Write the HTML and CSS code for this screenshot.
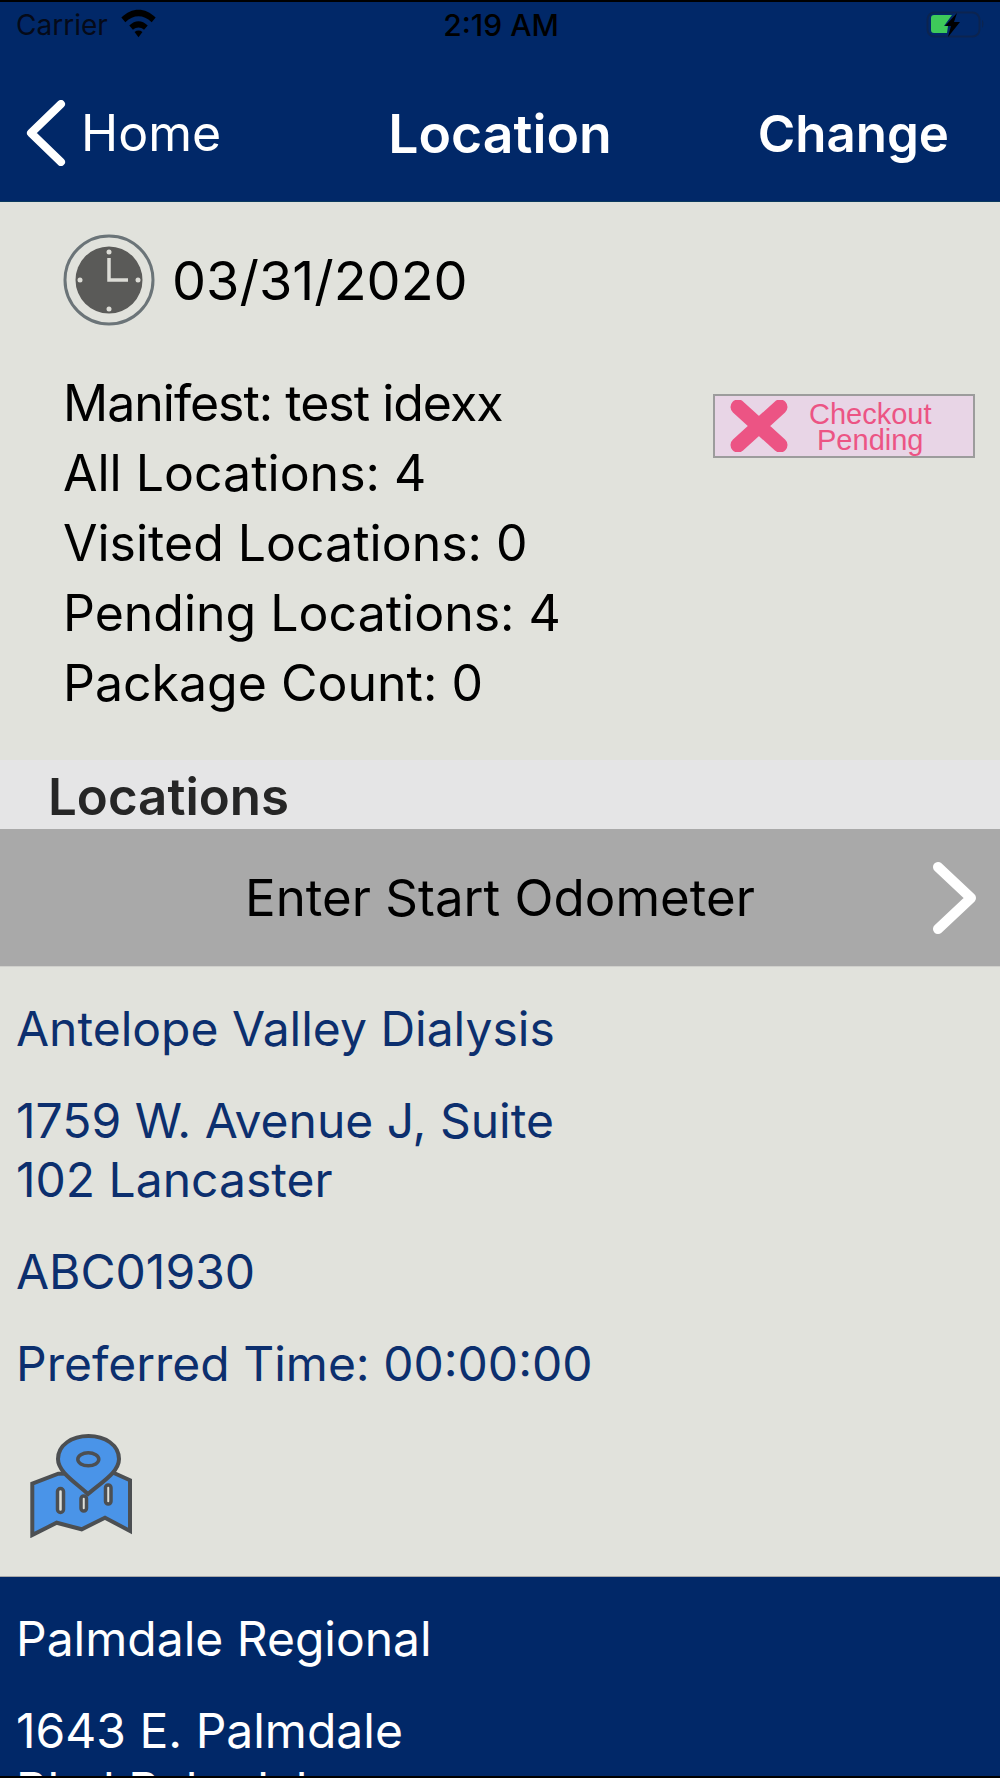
FILE: index.html
```html
<!doctype html>
<html lang="en">

<head>
    <meta charset="utf-8">
    <title>Location</title>
    <link rel="stylesheet" href="styles.css">
</head>

<body>
<div id="screen">
    <div id="header">
        <div class="status">
            <div class="status-left">
                <span>Carrier</span>
                <svg class="wifi" width="37" height="29" viewBox="1 3 26 22">
                    <path d="M1 9.500C9 1.500 19 1.500 27 9.500L24 13C17.500 7 10.500 7 4 13Z"/>
                    <path d="M7 15.500C11.500 11.200 16.500 11.200 21 15.500L18.200 18.700C15.500 16.500 12.500 16.500 9.800 18.700Z"/>
                    <path d="M11 20.500C13 19 15 19 17 20.500L14 24.500Z"/>
                </svg>
            </div>
            <div class="status-time">2:19 AM</div>
            <svg class="battery" width="62" height="28" viewBox="0 0 62 28">
                <rect x="3.500" y="1.500" width="52" height="24" rx="7" fill="none" stroke="#0c2450" stroke-width="2"/>
                <path d="M58 9c2 1 2 6 0 8z" fill="#0c2450"/>
                <path d="M7 7c0-2 1-3 3-3h18l-8 11h4l-1 7H10c-2 0-3-1-3-3z" fill="#3ec95a"/>
                <path d="M33 2L21 15h6l-3 11 12-15h-6z" fill="#000"/>
            </svg>
        </div>
        <div class="nav">
            <div class="nav-back">
                <svg width="40" height="66" viewBox="0 0 40 66">
                    <path d="M35 4L5 33l30 29" fill="none" stroke="#fff" stroke-width="8" stroke-linecap="round" stroke-linejoin="round"/>
                </svg>
                <span>Home</span>
            </div>
            <div class="nav-title">Location</div>
            <div class="nav-right">Change</div>
        </div>
    </div>

    <div class="summary">
        <div class="date-row">
            <svg width="92" height="92" viewBox="0 0 92 92">
                <circle cx="46" cy="46" r="44" fill="none" stroke="#6b7478" stroke-width="3"/>
                <circle cx="46" cy="46" r="33.500" fill="#5a5a58"/>
                <g fill="#dcdcd6">
                    <circle cx="46" cy="18" r="2.500"/>
                    <circle cx="46" cy="75" r="2.500"/>
                    <circle cx="17" cy="46" r="2.500"/>
                    <circle cx="75" cy="46" r="2.500"/>
                </g>
                <path d="M46 24v22h19" fill="none" stroke="#dcdcd6" stroke-width="3.500"/>
            </svg>
            <div class="date">03/31/2020</div>
        </div>
        <div class="stats">
            <div class="stat-lines">
                <div class="manifest">Manifest: test idexx</div>
                <div>All Locations: 4</div>
                <div>Visited Locations: 0</div>
                <div>Pending Locations: 4</div>
                <div>Package Count: 0</div>
            </div>
            <div class="badge">
                <svg width="58" height="52" viewBox="0 0 58 52">
                    <path d="M8 7l42 38M50 7L8 45" fill="none" stroke="#ec5484" stroke-width="15" stroke-linecap="round"/>
                </svg>
                <div class="badge-text">Checkout<br>Pending</div>
            </div>
        </div>
    </div>

    <div class="section-title">Locations</div>

    <div class="odometer">
        <span>Enter Start Odometer</span>
        <svg class="odometer-arrow" width="46" height="72" viewBox="0 0 46 72">
            <path d="M6 5l33 31L6 67" fill="none" stroke="#fff" stroke-width="10" stroke-linecap="round" stroke-linejoin="round"/>
        </svg>
    </div>

    <div class="location">
        <p>Antelope Valley Dialysis</p>
        <p>1759 W. Avenue J, Suite<br>102 Lancaster</p>
        <p>ABC01930</p>
        <p>Preferred Time: 00:00:00</p>
        <svg class="map-icon" width="104" height="104" viewBox="0 0 104 104">
            <path d="M2.300 49.700L28.300 39.700 83.300 38.700 100 46.300V97L75 83.700 51.700 95.300 26.700 88.700 2.300 101Z" fill="#4a94e8" stroke="#4c4f52" stroke-width="4"/>
            <path d="M58 60C45 48 28 38 28 25 28 11 42 2 58.500 2 75 2 89 11 89 25 89 38 72 48 58 60Z" fill="#4a94e8" stroke="#4c4f52" stroke-width="4"/>
            <ellipse cx="58.300" cy="25.300" rx="10.500" ry="6.500" fill="#4a94e8" stroke="#4c4f52" stroke-width="3.500"/>
            <rect x="27.500" y="54.500" width="6" height="24" rx="3" fill="#dfe0da" stroke="#4c4f52" stroke-width="3.500"/>
            <rect x="51" y="62" width="5.500" height="15" rx="2.700" fill="#dfe0da" stroke="#4c4f52" stroke-width="3.500"/>
            <rect x="75.500" y="51" width="5.500" height="19" rx="2.700" fill="#dfe0da" stroke="#4c4f52" stroke-width="3.500"/>
        </svg>
    </div>

    <div class="location location-active">
        <p>Palmdale Regional</p>
        <p>1643 E. Palmdale<br>Blvd Palmdale</p>
    </div>
</div>
</body>

</html>
```

FILE: styles.css
```css
html, body {
    margin: 0;
    padding: 0;
}

body {
    font-family: "Inter", "Liberation Sans", sans-serif;
    color: #000;
    background: #000;
}

#screen {
    height: 1774px;
    margin: 2px 0;
    overflow: hidden;
    background: #e1e2dc;
}

#header {
    height: 199px;
    background: #012868;
    border-bottom: 1px solid #0b3a5e;
}

.status {
    height: 46px;
    padding: 0 14px 0 16px;
    display: grid;
    grid-template-columns: 1fr auto 1fr;
    align-items: center;
    font-size: 28px;
    color: #050a18;
}

.status-left {
    display: flex;
    align-items: center;
    gap: 12px;
}

.wifi {
    fill: #000;
    margin-top: -4px;
}

.status-time {
    font-size: 30px;
    font-weight: 500;
    color: #000;
}

.battery {
    justify-self: end;
}

.nav {
    height: 152px;
    padding: 18px 26px 0;
    box-sizing: border-box;
    display: grid;
    grid-template-columns: 1fr auto 1fr;
    align-items: center;
    color: #fff;
    font-size: 50px;
}

.nav-back {
    display: flex;
    align-items: center;
    gap: 15px;
}

.nav-title {
    font-size: 53.500px;
    font-weight: 600;
}

.nav-right {
    justify-self: end;
    margin-right: 25px;
    font-size: 51px;
    font-weight: 600;
}

.summary {
    height: 558px;
    padding: 32px 0 0 63px;
    box-sizing: border-box;
    font-size: 50px;
}

.date-row {
    display: flex;
    align-items: center;
    gap: 17px;
}

.date {
    font-size: 54px;
}

.stats {
    display: flex;
    justify-content: space-between;
    margin-top: 42px;
}

.stat-lines {
    line-height: 70px;
}

.manifest {
    letter-spacing: -1px;
}

.badge {
    width: 262px;
    height: 64px;
    margin: 26px 25px 0 0;
    box-sizing: border-box;
    border: 2px solid #9c9c9c;
    background: #e8d5e6;
    display: flex;
    align-items: center;
    padding-left: 15px;
    color: #ec5484;
}

.badge-text {
    font-size: 29px;
    line-height: 26px;
    text-align: center;
    font-family: "Liberation Sans", sans-serif;
    margin-left: 21px;
    padding-top: 2px;
}

.section-title {
    height: 69px;
    padding-left: 48px;
    background: #e5e5e6;
    color: #262626;
    font-size: 51px;
    font-weight: 600;
    line-height: 74px;
}

.odometer {
    height: 137px;
    background: #a9a9a9;
    display: flex;
    align-items: center;
    justify-content: center;
    position: relative;
    font-size: 51px;
}

.odometer-arrow {
    position: absolute;
    right: 22px;
    top: 33px;
}

.location {
    height: 610px;
    padding: 32px 16px 0;
    box-sizing: border-box;
    border-top: 1px solid #d0d0cc;
    color: #0c2f6e;
    font-size: 48px;
    line-height: 59px;
}

.location p {
    margin: 0 0 33px;
}

.map-icon {
    display: block;
    margin: 41px 0 0 14px;
}

.location-active {
    background: #012868;
    color: #fff;
    border-top-color: #a9a9a9;
}
```
